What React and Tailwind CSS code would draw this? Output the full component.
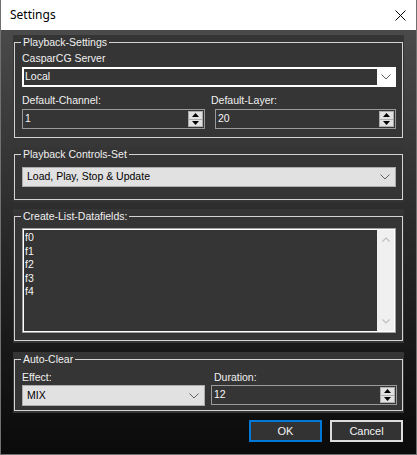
import React from 'react';

function Chevron({ color = '#606060' }) {
  return (
    <svg width="10" height="6" viewBox="0 0 10 6">
      <polyline points="0.5,0.5 5,5 9.5,0.5" fill="none" stroke={color} strokeWidth="1" />
    </svg>
  );
}

function SpinButtons() {
  return (
    <div className="flex flex-col w-[15px] h-[16px] mr-[1px]">
      <div className="flex-1 flex items-center justify-center bg-[#e1e1e1] border border-[#adadad]">
        <svg width="7" height="4" viewBox="0 0 7 4"><polygon points="3.5,0 7,4 0,4" fill="#000" /></svg>
      </div>
      <div className="flex-1 flex items-center justify-center bg-[#e1e1e1] border border-t-0 border-[#adadad]">
        <svg width="7" height="4" viewBox="0 0 7 4"><polygon points="0,0 7,0 3.5,4" fill="#000" /></svg>
      </div>
    </div>
  );
}

function SpinBox({ value, className = '' }) {
  return (
    <div className={`h-[20px] flex items-center bg-[#353535] border border-[#9a9a9a] ${className}`}>
      <span className="flex-1 pl-[2px] text-[#f4f4f4]">{value}</span>
      <SpinButtons />
    </div>
  );
}

function LightCombo({ value, className = '' }) {
  return (
    <div className={`h-[20px] flex items-center bg-[#e1e1e1] border border-[#adadad] pl-[4px] pr-[5px] ${className}`}>
      <span className="flex-1 text-black">{value}</span>
      <Chevron />
    </div>
  );
}

function Group({ label, className = '', fieldClass = '', children }) {
  return (
    <div className={`bg-[#353535] px-[1px] pt-[1px] pb-[2px] ${className}`}>
      <fieldset className={`border border-[#d4d4d4] pl-[7px] pr-[6px] ${fieldClass}`}>
        <legend className="ml-[-1px] px-[2px] leading-[13px] text-[#f0f0f0]">{label}</legend>
        {children}
      </fieldset>
    </div>
  );
}

export default function App() {
  const fields = ['f0', 'f1', 'f2', 'f3', 'f4'];

  return (
    <div className="w-[417px] h-[455px] flex flex-col border-x border-b border-[#707070] font-['Liberation_Sans',Arial,sans-serif] text-[10.5px] overflow-hidden">
      {/* title bar */}
      <div className="h-[30px] shrink-0 bg-white flex items-center justify-between pl-[9px] pr-[10px]">
        <span className="font-['Noto_Sans',sans-serif] text-[12px] text-black">Settings</span>
        <svg width="11" height="11" viewBox="0 0 11 11">
          <path d="M0.5 0.5 L10.5 10.5 M10.5 0.5 L0.5 10.5" stroke="#000" strokeWidth="1" />
        </svg>
      </div>

      <div className="flex-1 flex flex-col px-[12px] pt-[5px] bg-gradient-to-b from-[#4a4a4a] to-[#0a0a0a]">
        <Group label="Playback-Settings" fieldClass="pb-[8px]">
          <div className="mt-[3px] leading-[13px] text-[#f0f0f0]">CasparCG Server</div>
          <div className="mt-[2px] h-[20px] flex bg-white p-[2px]">
            <div className="flex-1 flex items-center bg-[#353535] pl-[1px] text-[#f4f4f4]">Local</div>
            <div className="w-[17px] flex items-center justify-center">
              <Chevron />
            </div>
          </div>
          <div className="mt-[7px] grid grid-cols-[183px_1fr] gap-x-[10px]">
            <div className="leading-[13px] text-[#f0f0f0]">Default-Channel:</div>
            <div className="ml-[-4px] leading-[13px] text-[#f0f0f0]">Default-Layer:</div>
            <SpinBox value="1" className="mt-[2px]" />
            <SpinBox value="20" className="mt-[2px]" />
          </div>
        </Group>

        <Group label="Playback Controls-Set" className="mt-[7px]" fieldClass="pb-[12px]">
          <LightCombo value="Load, Play, Stop & Update" className="mt-[6px]" />
        </Group>

        <Group label="Create-List-Datafields:" className="mt-[7px]" fieldClass="pb-[7px]">
          <div className="mt-[5px] h-[105px] border border-[#a0a0a0]">
            <div className="h-full flex border border-white">
              <div className="flex-1 bg-[#353535] pt-[1px] pl-[1px] text-[#f4f4f4]">
                {fields.map((f) => (
                  <div key={f} className="leading-[13.5px]">{f}</div>
                ))}
              </div>
              <div className="w-[17px] bg-[#f0f0f0] flex flex-col items-center justify-between py-[7px]">
                <svg width="8" height="5" viewBox="0 0 8 5">
                  <polyline points="0.5,4.5 4,1 7.5,4.5" fill="none" stroke="#bfbfbf" strokeWidth="1.2" />
                </svg>
                <svg width="8" height="5" viewBox="0 0 8 5">
                  <polyline points="0.5,0.5 4,4 7.5,0.5" fill="none" stroke="#bfbfbf" strokeWidth="1.2" />
                </svg>
              </div>
            </div>
          </div>
        </Group>

        <Group label="Auto-Clear" className="mt-[9px]" fieldClass="pb-[4px]">
          <div className="mt-[5px] grid grid-cols-[183px_1fr] gap-x-[6px]">
            <div className="leading-[13px] text-[#f0f0f0]">Effect:</div>
            <div className="ml-[3px] leading-[13px] text-[#f0f0f0]">Duration:</div>
            <LightCombo value="MIX" className="mt-[1px] h-[21px]" />
            <SpinBox value="12" className="mt-[1px] mr-[-1px]" />
          </div>
        </Group>

        <div className="mt-[7px] flex justify-end gap-[8px] mr-[1px]">
          <button className="w-[73px] h-[22px] bg-[#333333] border-2 border-[#0078d7] text-[#f4f4f4] text-[11px]">
            OK
          </button>
          <button className="w-[73px] h-[22px] bg-[#333333] border-2 border-[#dcdcdc] text-[#f4f4f4] text-[11px]">
            Cancel
          </button>
        </div>
      </div>
    </div>
  );
}
